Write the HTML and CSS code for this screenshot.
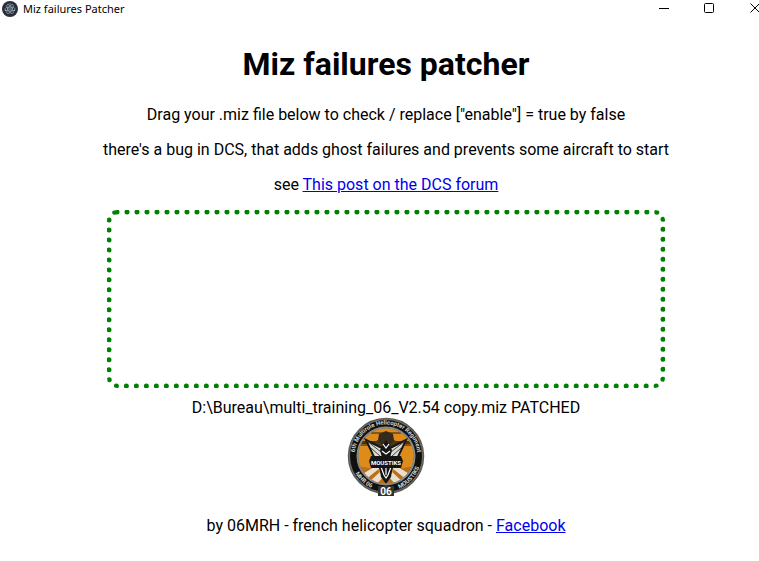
FILE: index.html
```html
<!DOCTYPE html>
<html lang="en">
<head>
<meta charset="utf-8">
<title>Miz failures Patcher</title>
<link rel="stylesheet" href="styles.css">
</head>
<body>
<header class="titlebar">
  <svg class="app-icon" viewBox="0 0 16 16" aria-hidden="true">
    <circle cx="8" cy="8" r="8" fill="#2b2e3a"/>
    <g fill="none" stroke="#a9c4cf" stroke-width=".7" opacity=".85">
      <ellipse cx="8" cy="8" rx="5.2" ry="2"/>
      <ellipse cx="8" cy="8" rx="5.2" ry="2" transform="rotate(60 8 8)"/>
      <ellipse cx="8" cy="8" rx="5.2" ry="2" transform="rotate(120 8 8)"/>
    </g>
    <g fill="#a9c4cf"><circle cx="8" cy="8" r=".7"/><circle cx="3.4" cy="9.4" r=".6"/><circle cx="12.4" cy="9.4" r=".6"/><circle cx="8" cy="2.8" r=".5"/></g>
  </svg>
  <span class="title">Miz failures Patcher</span>
  <div class="controls">
    <button type="button" aria-label="Minimize"><svg viewBox="0 0 11 11"><path d="M1 5.5H11"/></svg></button>
    <button type="button" aria-label="Maximize"><svg viewBox="0 0 11 11"><rect x=".5" y=".5" width="9" height="9" rx="1"/></svg></button>
    <button type="button" aria-label="Close"><svg viewBox="0 0 11 11"><path d="M.5 .5l9 9M9.500 .5l-9 9"/></svg></button>
  </div>
</header>
<main class="content">
  <h1>Miz failures patcher</h1>
  <p>Drag your .miz file below to check / replace ["enable"] = true by false</p>
  <p>there's a bug in DCS, that adds ghost failures and prevents some aircraft to start</p>
  <p>see <a href="#forum">This post on the DCS forum</a></p>
  <div class="dropzone"></div>
  <div class="status">D:\Bureau\multi_training_06_V2.54 copy.miz PATCHED</div>
  <svg class="logo" viewBox="0 0 78 80" role="img" aria-label="06 MHR Moustiks">
    <defs>
      <path id="arc-top" d="M9.500 50A31.500 31.500 0 1 1 68.500 50"/>
      <path id="arc-left" d="M5 48A35 35 0 0 0 33 73.500"/>
      <path id="arc-right" d="M47 73.200A35 35 0 0 0 73.500 45"/>
      <clipPath id="disc"><circle cx="39" cy="39" r="28"/></clipPath>
    </defs>
    <circle cx="39" cy="39" r="37.500" fill="#101010" stroke="#5c5c58" stroke-width="1.500"/>
    <circle cx="39" cy="39" r="36.500" fill="none" stroke="#aaa9a3" stroke-width=".6"/>
    <circle cx="39" cy="39" r="28" fill="#dd8b1b"/>
    <g clip-path="url(#disc)">
      <path d="M10 49L29 52 39 60 49 52 68 49V70H10z" fill="#b96f1c"/>
      <path d="M14 58L27 50 33 51 18 63zM21 66L34 54 38 58 28 69zM64 58L51 50 45 51 60 63zM57 66L44 54 40 58 50 69z" fill="#e9dfcc"/>
      <path d="M12 24h17l6-3 4-5 4 5 6 3h17v3H53l-6 5H31l-6-5H12z" fill="#4a3414"/>
      <path d="M24 16h30M11 28h18M49 28h18" stroke="#2d210f" stroke-width="1"/>
      <path d="M32 17l7-3 7 3 1 6-4 5h-8l-4-5z" fill="#352b1d"/>
      <path d="M33 54h12l-1 6-5 7-5-7z" fill="#151515"/>
    </g>
    <circle cx="39" cy="39" r="28.500" fill="none" stroke="#898a84" stroke-width="2"/>
    <path d="M19 23L35 31l2 6-2 5H28zM59 23L43 31l-2 6 2 5h7z" fill="#dcdcd5" stroke="#161616" stroke-width="2"/>
    <path d="M20 24l14 11M58 24L44 35M24 31l9 8M54 31l-9 8" stroke="#45433e" stroke-width="1"/>
    <path d="M39 23l3 5 3 5-2 8 4 7-3 9-5 5-5-5-3-9 4-7-2-8 3-5z" fill="#151515"/>
    <path d="M36 27l3 4 3-4M35 34l4 3 4-3M34 50l3 8 2 3 2-3 3-8M39 49v9" fill="none" stroke="#fff" stroke-width="1.200"/>
    <path d="M24 39h30l2 5-2 7H24l-2-7z" fill="#151515"/>
    <g class="emblem-text" text-anchor="middle">
      <text x="39" y="48" class="name">MOUSTIKS</text>
      <text class="ring"><textPath href="#arc-top" startOffset="50%">6th Multirole Helicopter Regiment</textPath></text>
      <text class="ring lower"><textPath href="#arc-left" startOffset="50%">MHR 06</textPath></text>
      <text class="ring lower"><textPath href="#arc-right" startOffset="50%">MOUSTIKS</textPath></text>
      <rect x="31" y="69" width="16" height="10" fill="#34342f"/>
      <text x="39" y="78" class="number">06</text>
    </g>
  </svg>
  <p class="credit">by 06MRH - french helicopter squadron - <a href="#facebook">Facebook</a></p>
</main>
</body>
</html>
```
FILE: styles.css
```css
body {
  margin: 0;
  background: #fff;
  color: #000;
  font: 16px/19px Roboto, sans-serif;
  overflow-x: hidden;
}

.titlebar {
  display: flex;
  align-items: center;
  height: 17px;
  padding-left: 2px;
  font: 11px/16px "Noto Sans", sans-serif;
}

.app-icon {
  width: 16px;
  height: 16px;
  margin-right: 5px;
}

.controls {
  display: flex;
  margin-left: auto;
  margin-right: -19px;
}

.controls button {
  display: flex;
  justify-content: center;
  align-items: center;
  width: 46px;
  height: 17px;
  padding: 0;
  border: 0;
  background: none;
}

.controls svg {
  width: 11px;
  height: 11px;
  fill: none;
  stroke: #000;
}

.content {
  padding-left: 13px;
  text-align: center;
}

h1 {
  margin: 28px 0 22px;
  font-size: 32px;
  line-height: 38px;
}

p {
  margin: 0 0 16px;
}

a {
  color: #00e;
}

.dropzone {
  box-sizing: border-box;
  width: 75%;
  max-width: 558px;
  height: 178px;
  margin: 0 auto 10px;
  border: 5px dotted green;
  border-radius: 10px;
}

.logo {
  display: block;
  width: 78px;
  height: 80px;
  margin: 0 auto 19px;
}

.emblem-text {
  font-family: Roboto, sans-serif;
  font-weight: 700;
  fill: #fff;
}

.name {
  font-size: 6px;
}

.ring {
  font-size: 6px;
  fill: #d2d2cc;
}

.number {
  font-size: 10px;
}
```
